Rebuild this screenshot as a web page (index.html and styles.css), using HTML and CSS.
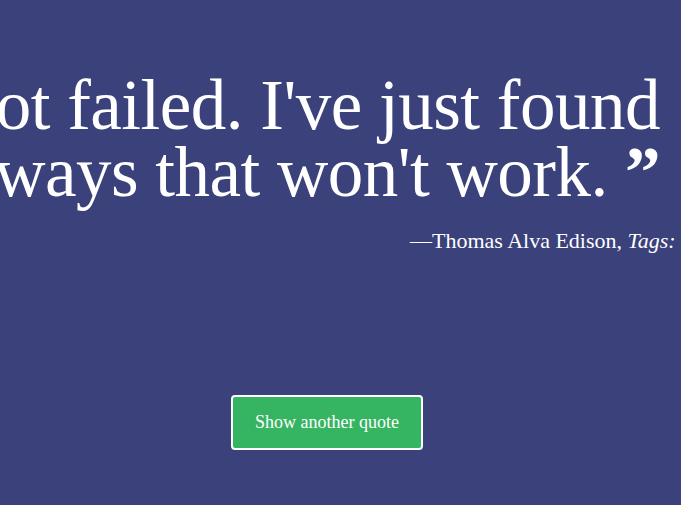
FILE: index.html
```html
<!DOCTYPE html>
<html lang="en">
<head>
<meta charset="utf-8">
<title>Random Quote</title>
<link rel="stylesheet" href="styles.css">
</head>
<body>
<main class="page">
  <blockquote class="quote">
    <p class="quote-text"><span class="mark">&ldquo;</span> I have not failed. I've just found<br>10,000 ways that won't work. <span class="mark">&rdquo;</span></p>
    <p class="attr">&mdash;Thomas Alva Edison, <em>Tags: failure, success</em></p>
  </blockquote>
  <div class="actions">
    <button class="btn" type="button">Show another quote</button>
  </div>
</main>
</body>
</html>
```
FILE: styles.css
```css
html, body {
  margin: 0;
  padding: 0;
  height: 100%;
  overflow: hidden;
  background: #3a417b;
}
.page {
  font-family: "Liberation Serif", "DejaVu Serif", serif;
  color: #ffffff;
  padding-top: 72px;
}
.quote {
  margin: 0 0 0 -600px;
  width: 1260px;
}
.quote-text {
  margin: 0;
  font-size: 71px;
  line-height: 67px;
  white-space: nowrap;
  text-align: right;
  letter-spacing: -0.5px;
}
.mark {
  font-weight: bold;
}
.attr {
  margin: 22px 0 0 1010px;
  font-size: 22px;
  white-space: nowrap;
}
.actions {
  padding: 141px 0 0 231px;
}
.btn {
  font-family: "Liberation Serif", "DejaVu Serif", serif;
  font-size: 18px;
  color: #fff;
  background: #35b562;
  border: 2px solid #fff;
  border-radius: 4px;
  width: 192px;
  height: 55px;
}
```
